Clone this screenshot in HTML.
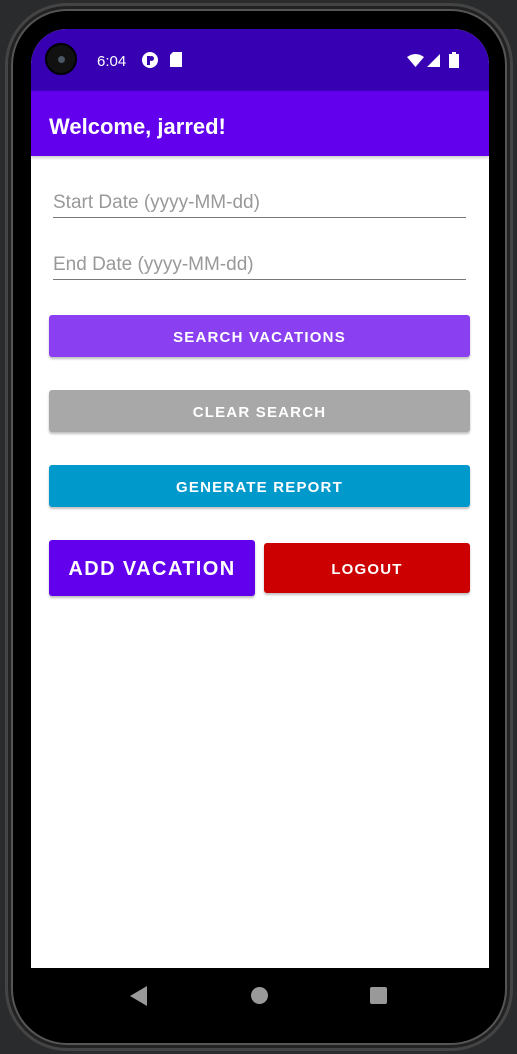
<!DOCTYPE html>
<html><head><style>
*{margin:0;padding:0;box-sizing:border-box}
body{width:517px;height:1054px;background:#2a2b2d;position:relative;overflow:hidden;font-family:"Liberation Sans",Roboto,sans-serif}
.phone{position:absolute;left:5px;top:3px;width:508px;height:1048px;border-radius:62px;background:#000;border:3px solid #444;box-shadow:inset 0 0 0 3px #222,inset 0 0 0 5px #555}
.screen{position:absolute;left:31px;top:29px;width:458px;height:939px;background:#fff;border-radius:36px 36px 0 0;overflow:hidden}
.status{height:62px;background:#3700b3;position:relative;color:#fff}
.cam{position:absolute;left:14px;top:14px;width:32px;height:32px;border-radius:50%;background:#111;border:2px solid #000}
.cam:after{content:"";position:absolute;left:11px;top:11px;width:7px;height:7px;border-radius:50%;background:#4a5866}
.time{position:absolute;left:66px;top:24px;font-size:15px}
.appbar{height:65px;background:#6200ee;color:#fff;font-size:22px;font-weight:bold;padding:23px 0 0 18px;box-shadow:0 2px 3px rgba(0,0,0,.2)}
.field{position:absolute;left:22px;width:413px;border-bottom:1px solid #777;color:#999;font-size:19px;padding-bottom:3px}
.btn{position:absolute;color:#fff;text-align:center;font-size:15px;font-weight:bold;letter-spacing:1.2px;border-radius:3px;box-shadow:0 2px 2px rgba(0,0,0,.25)}
</style></head><body>
<div class="phone"></div>
<div class="screen">
 <div class="status"><div class="cam"></div><div class="time">6:04</div>
  <svg style="position:absolute;left:111px;top:23px" width="16" height="16"><circle cx="8" cy="8" r="8" fill="#fff"/><rect x="5" y="4" width="3" height="9" fill="#3700b3"/><circle cx="9.5" cy="6.5" r="2.5" fill="#3700b3"/></svg>
  <svg style="position:absolute;left:139px;top:23px" width="12" height="15"><path d="M3 0H12V15H0V3Z" fill="#fff"/></svg>
  <svg style="position:absolute;left:376px;top:25px" width="17" height="13"><path d="M0 3Q8.5-3 17 3L8.5 13Z" fill="#fff"/></svg>
  <svg style="position:absolute;left:396px;top:25px" width="13" height="13"><path d="M13 0V13H0Z" fill="#fff"/></svg>
  <svg style="position:absolute;left:418px;top:23px" width="10" height="16"><rect x="0" y="2" width="10" height="14" fill="#fff"/><rect x="3" y="0" width="4" height="3" fill="#fff"/></svg>
 </div>
 <div class="appbar">Welcome, jarred!</div>
 <div class="field" style="top:163px">Start Date (yyyy-MM-dd)</div>
 <div class="field" style="top:225px">End Date (yyyy-MM-dd)</div>
 <div class="btn" style="left:18px;top:286px;width:421px;height:42px;line-height:46px;background:#8a3ff0">SEARCH VACATIONS</div>
 <div class="btn" style="left:18px;top:361px;width:421px;height:42px;line-height:46px;background:#a8a8a8">CLEAR SEARCH</div>
 <div class="btn" style="left:18px;top:436px;width:421px;height:42px;line-height:46px;background:#0099cc">GENERATE REPORT</div>
 <div class="btn" style="left:18px;top:511px;width:206px;height:56px;line-height:59px;background:#6200ee;font-size:20px;letter-spacing:1.4px">ADD VACATION</div>
 <div class="btn" style="left:233px;top:514px;width:206px;height:50px;line-height:54px;background:#cc0000">LOGOUT</div>
</div>
<svg style="position:absolute;left:130px;top:986px" width="18" height="20"><path d="M17 0V20L0 10Z" fill="#999"/></svg>
<div style="position:absolute;left:251px;top:987px;width:17px;height:17px;border-radius:50%;background:#999"></div>
<div style="position:absolute;left:370px;top:987px;width:17px;height:17px;border-radius:2px;background:#999"></div>
</body></html>
